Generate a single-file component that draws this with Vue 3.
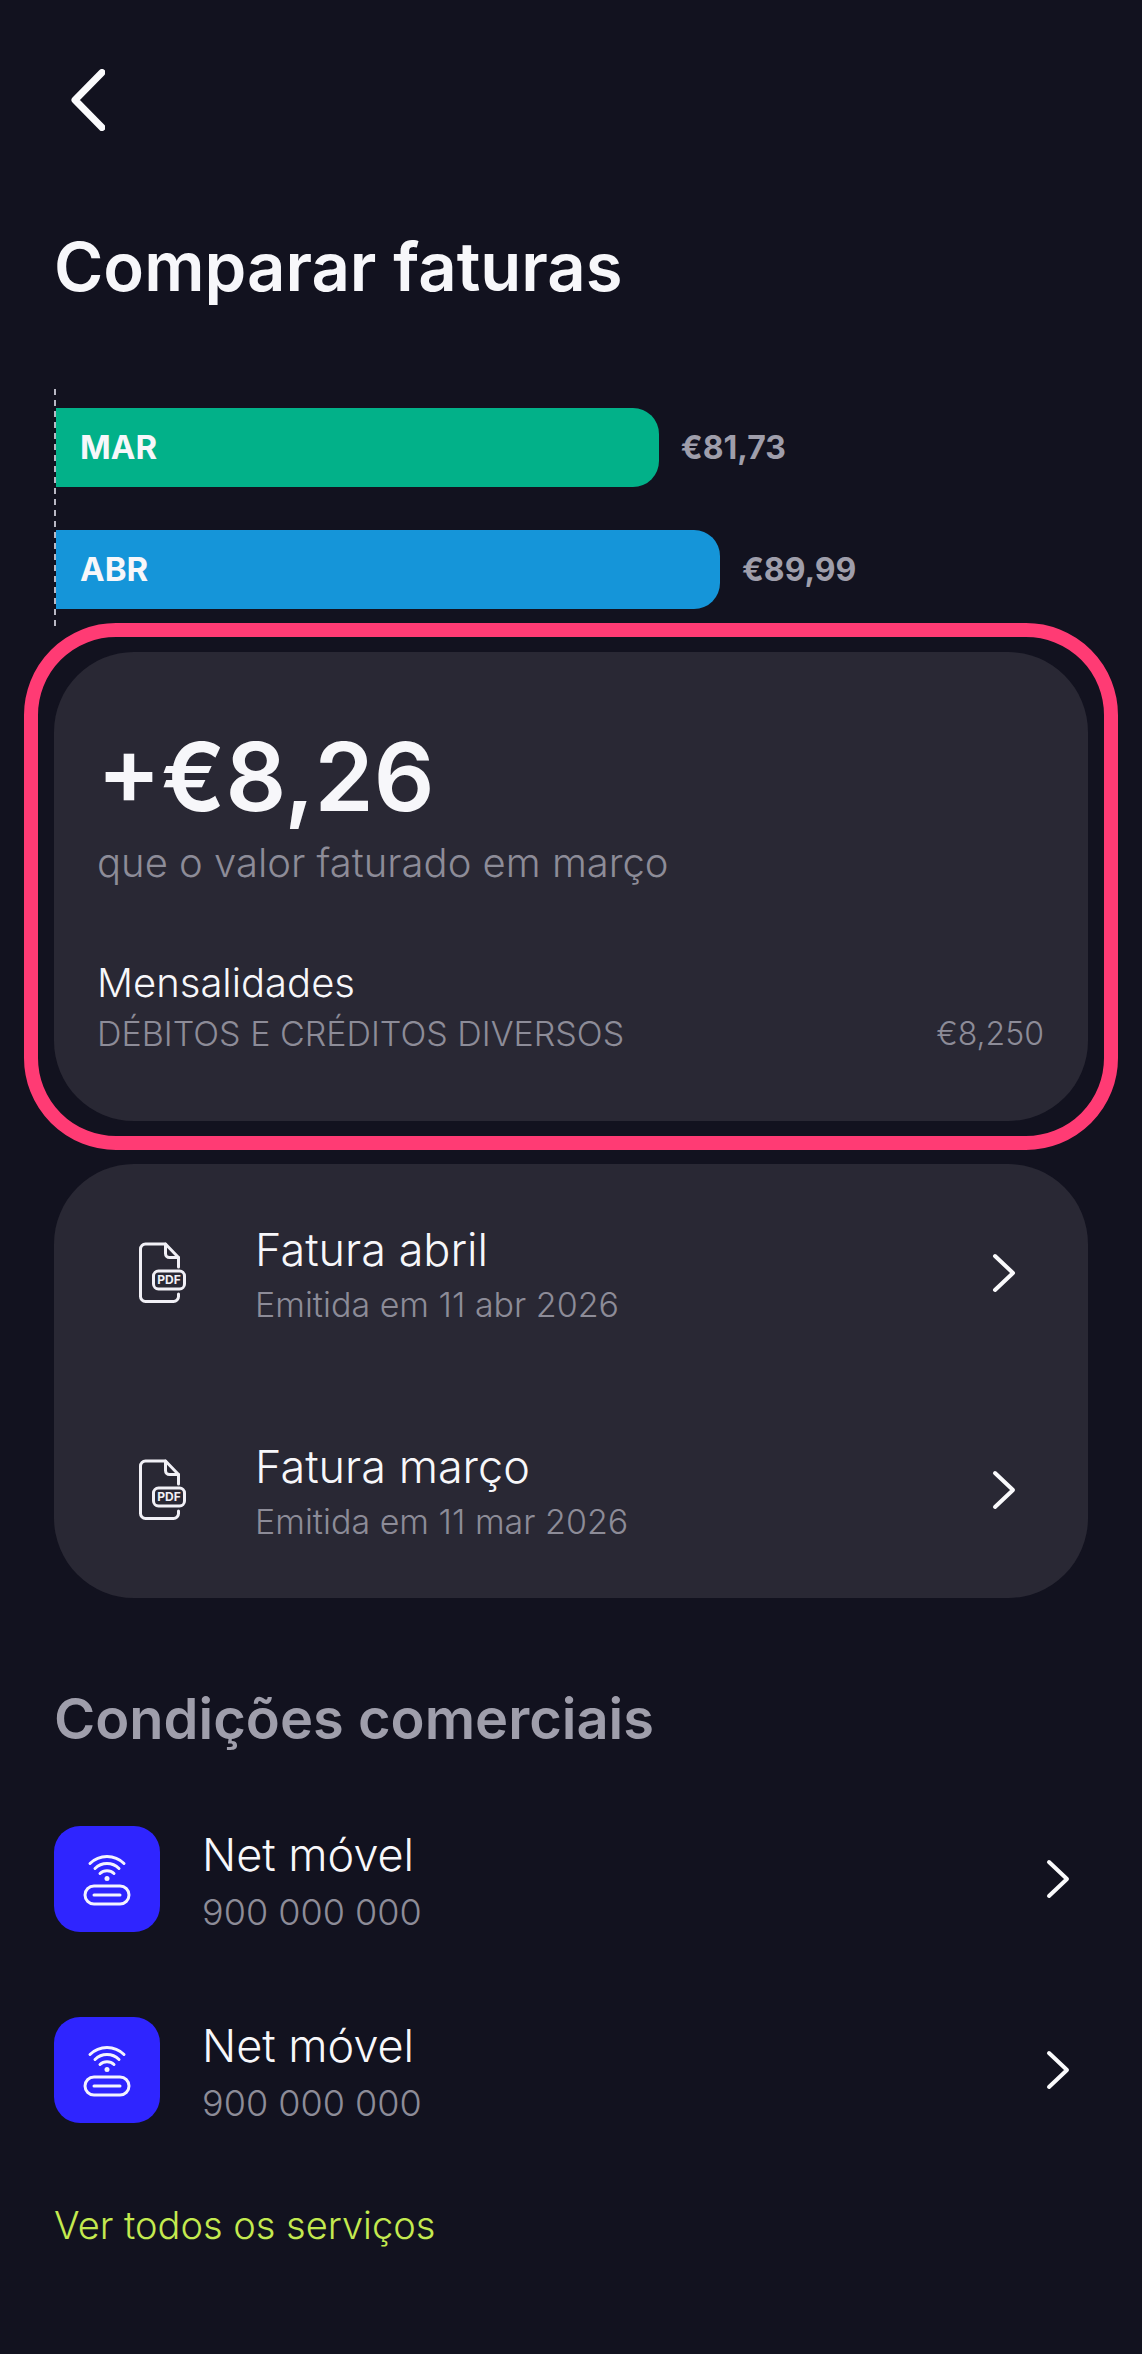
<script setup>
const bills = [
  { month: 'MAR', value: 81.73, color: 'green' },
  { month: 'ABR', value: 89.99, color: 'blue' },
];

const invoices = [
  { title: 'Fatura abril', issued: 'Emitida em 11 abr 2026' },
  { title: 'Fatura março', issued: 'Emitida em 11 mar 2026' },
];

const services = [
  { id: 1, name: 'Net móvel', number: '900 000 000' },
  { id: 2, name: 'Net móvel', number: '900 000 000' },
];

const maxValue = Math.max(...bills.map((bill) => bill.value));

// the longest bar leaves room on the right for its value
const barWidth = (value) => `${(value / maxValue) * 64.4}%`;

const formatEuro = (value) => '€' + value.toFixed(2).replace('.', ',');
</script>

<template>
  <main class="page">
    <header class="header">
      <button class="back" type="button" aria-label="Voltar">
        <svg width="34" height="62" viewBox="0 0 34 62" fill="none">
          <path d="M31 3.5 4 31l27 27.5" stroke="#fafafc" stroke-width="7" stroke-linecap="round" stroke-linejoin="round" />
        </svg>
      </button>
    </header>

    <h1 class="title">Comparar faturas</h1>

    <div class="chart">
      <div v-for="bill in bills" :key="bill.month" class="chart-row">
        <div class="bar" :class="bill.color" :style="{ width: barWidth(bill.value) }">{{ bill.month }}</div>
        <span class="bar-value">{{ formatEuro(bill.value) }}</span>
      </div>
    </div>

    <section class="card summary">
      <p class="amount">+€8,26</p>
      <p class="amount-note">que o valor faturado em março</p>
      <h2 class="group">Mensalidades</h2>
      <div class="line">
        <span class="line-name">DÉBITOS E CRÉDITOS DIVERSOS</span>
        <span>€8,250</span>
      </div>
    </section>

    <section class="card invoices">
      <button v-for="invoice in invoices" :key="invoice.title" class="row invoice" type="button">
        <svg class="pdf" width="48" height="62" viewBox="0 0 48 62" fill="none" stroke="#f1f0f6" stroke-width="3" stroke-linecap="round" stroke-linejoin="round">
          <path d="M39.5 25v-9.500L26.500 2H6.500a5 5 0 0 0-5 5v47.500a5 5 0 0 0 5 5h28a5 5 0 0 0 5-5V52" />
          <path d="M26.500 2v9.500a4 4 0 0 0 4 4h9" />
          <rect x="14.500" y="29" width="31" height="18" rx="5" />
          <text x="30" y="42" text-anchor="middle" class="pdf-label">PDF</text>
        </svg>
        <span class="texts">
          <span class="name">{{ invoice.title }}</span>
          <span class="detail">{{ invoice.issued }}</span>
        </span>
        <svg class="chevron" width="24" height="42" viewBox="0 0 24 42" fill="none">
          <path d="M3 4l18 17L3 38" stroke="#fafafc" stroke-width="4" stroke-linecap="round" stroke-linejoin="round" />
        </svg>
      </button>
    </section>

    <h2 class="subtitle">Condições comerciais</h2>

    <div class="services">
      <button v-for="service in services" :key="service.id" class="row service" type="button">
        <span class="tile">
          <svg width="48" height="54" viewBox="0 0 48 54" fill="none" stroke="#f4f3ff" stroke-width="3" stroke-linecap="round">
            <path d="M7 11.500a24 24 0 0 1 34 0" />
            <path d="M12 16.500a17 17 0 0 1 24 0" />
            <path d="M17 21.500a10 10 0 0 1 14 0" />
            <circle cx="24" cy="26.500" r="2.500" fill="#f4f3ff" stroke="none" />
            <rect x="2" y="34" width="44" height="18" rx="9" />
            <path d="M11 43h26" />
          </svg>
        </span>
        <span class="texts">
          <span class="name">{{ service.name }}</span>
          <span class="detail">{{ service.number }}</span>
        </span>
        <svg class="chevron" width="24" height="42" viewBox="0 0 24 42" fill="none">
          <path d="M3 4l18 17L3 38" stroke="#fafafc" stroke-width="4" stroke-linecap="round" stroke-linejoin="round" />
        </svg>
      </button>
    </div>

    <a class="all-services" href="#">Ver todos os serviços</a>
  </main>
</template>

<style>
body {
  margin: 0;
  background: #12121f;
}
</style>

<style scoped>
.page {
  box-sizing: border-box;
  min-height: 100vh;
  padding: 0 54px 96px;
  background: #12121f;
  color: #f7f7fa;
  font-family: Inter, 'Open Sans', sans-serif;
}

button {
  padding: 0;
  border: 0;
  background: none;
  color: inherit;
  font: inherit;
  text-align: left;
  cursor: pointer;
}

svg {
  display: block;
  flex: none;
}

h1,
h2,
p {
  margin: 0;
}

.header {
  display: flex;
  padding: 69px 0 0 17px;
}

.title {
  margin-top: 96px;
  font-size: 67px;
  font-weight: 600;
  line-height: 80px;
}

/* comparison chart */
.chart {
  position: relative;
  display: flex;
  flex-direction: column;
  gap: 43px;
  margin-top: 82px;
  padding: 19px 0 20px;
}

.chart::before {
  content: '';
  position: absolute;
  top: 0;
  bottom: 0;
  left: 0;
  width: 2px;
  background: repeating-linear-gradient(#b9b8c4 0 6px, #12121f 6px 11px);
}

.chart-row {
  display: flex;
  align-items: center;
  gap: 22px;
}

.bar {
  box-sizing: border-box;
  padding-left: 26px;
  border-radius: 0 26px 26px 0;
  font-size: 33px;
  font-weight: 700;
  line-height: 79px;
}

.green {
  background: #02b189;
}

.blue {
  background: #1595d9;
}

.bar-value {
  color: #9f9eab;
  font-size: 32px;
  font-weight: 700;
}

/* cards */
.card {
  border-radius: 80px;
  background: #292834;
}

.summary {
  position: relative;
  margin-top: 23px;
  padding: 75px 44px 65px 43px;
}

/* highlight ring around the difference */
.summary::after {
  content: '';
  position: absolute;
  inset: -29px -30px;
  border: 14px solid #ff3b74;
  border-radius: 92px;
  pointer-events: none;
}

.amount {
  font-size: 95px;
  font-weight: 600;
  line-height: 100px;
}

.amount-note {
  margin-top: 12px;
  color: #8d8c98;
  font-size: 40px;
  font-weight: 300;
  line-height: 48px;
}

.group {
  margin-top: 72px;
  font-size: 40px;
  font-weight: 300;
  line-height: 48px;
}

.line {
  display: flex;
  justify-content: space-between;
  margin-top: 5px;
  color: #8d8c98;
  font-size: 32px;
  font-weight: 300;
  line-height: 44px;
}

.line-name {
  font-size: 34px;
}

.invoices {
  margin-top: 43px;
}

.row {
  display: flex;
  align-items: center;
  width: 100%;
}

.invoice {
  height: 217px;
  padding: 0 72px 0 85px;
}

.invoice .texts {
  margin-left: 68px;
}

.pdf-label {
  fill: #f1f0f6;
  stroke: none;
  font-size: 12px;
  font-weight: 700;
}

.texts {
  display: flex;
  flex: 1;
  flex-direction: column;
  gap: 8px;
  padding-top: 6px;
}

.name {
  font-size: 45px;
  font-weight: 300;
  line-height: 50px;
}

.detail {
  color: #8d8c98;
  font-size: 34px;
  font-weight: 300;
  line-height: 44px;
}

/* services */
.subtitle {
  margin-top: 89px;
  color: #9f9eab;
  font-size: 56px;
  font-weight: 600;
  line-height: 64px;
}

.services {
  display: flex;
  flex-direction: column;
  gap: 85px;
  margin-top: 75px;
}

.service {
  height: 106px;
  padding-right: 18px;
}

.service .texts {
  gap: 10px;
  margin-left: 42px;
}

.service .detail {
  font-size: 36px;
}

.tile {
  display: flex;
  align-items: center;
  justify-content: center;
  width: 106px;
  height: 106px;
  border-radius: 26px;
  background: #2f25ff;
}

.all-services {
  display: inline-block;
  margin-top: 78px;
  color: #c4ea4f;
  font-size: 38px;
  font-weight: 300;
  line-height: 48px;
  text-decoration: none;
}
</style>
